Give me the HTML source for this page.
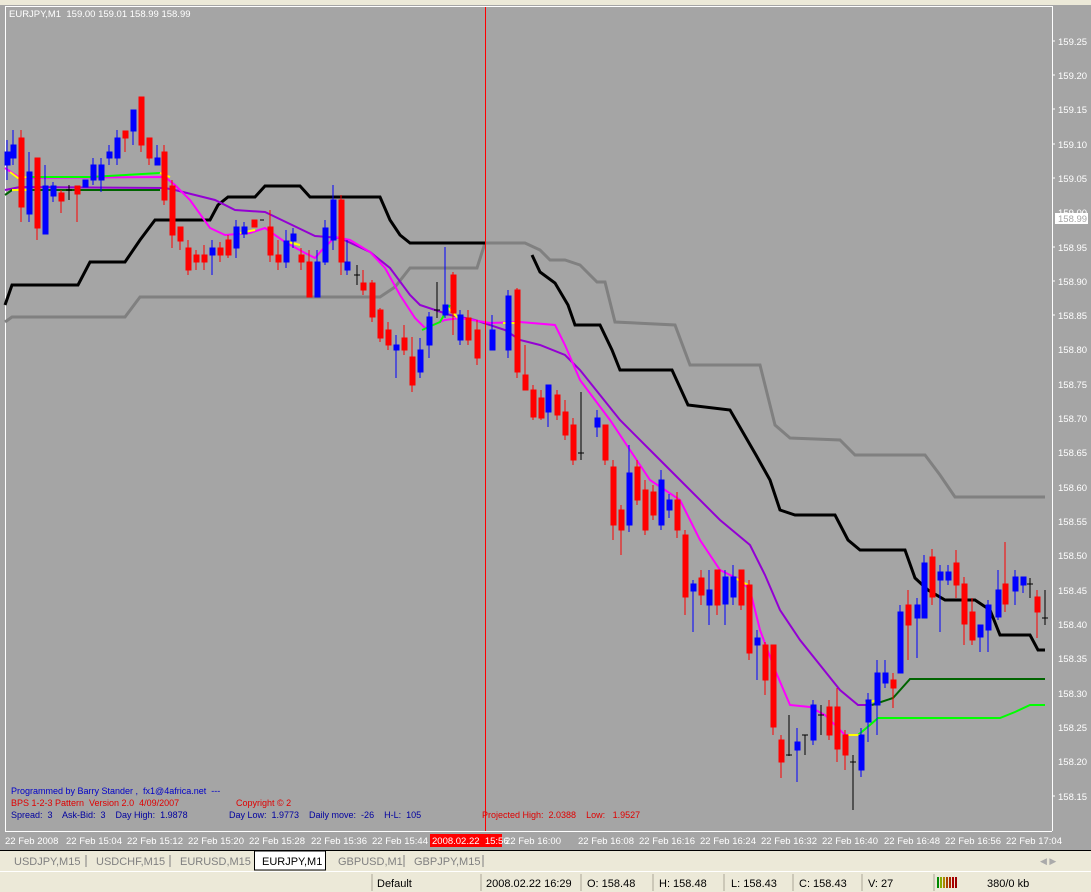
<!DOCTYPE html>
<html><head><meta charset="utf-8"><style>
body{margin:0;width:1091px;height:892px;overflow:hidden;background:#ece9d8;font-family:"Liberation Sans",sans-serif}
svg{position:absolute;left:0;top:0}
text{white-space:pre}
</style></head><body>
<svg width="1091" height="892" xmlns="http://www.w3.org/2000/svg" font-family="Liberation Sans, sans-serif" xml:space="preserve">
<rect x="0" y="0" width="1091" height="850" fill="#a5a5a5"/>
<rect x="0" y="0" width="1091" height="5" fill="#ece9d8"/>
<line x1="5.5" y1="6" x2="5.5" y2="831" stroke="#fff"/>
<line x1="5" y1="6.5" x2="1052" y2="6.5" stroke="#fff"/>
<line x1="1052.5" y1="6" x2="1052.5" y2="831" stroke="#fff"/>
<line x1="5" y1="831.5" x2="1052" y2="831.5" stroke="#fff"/>
<text x="9" y="17" font-size="9.5" fill="#fff">EURJPY,M1  159.00 159.01 158.99 158.99</text>
<g font-size="9.5" fill="#fff">
<text x="1058" y="45">159.25</text><text x="1058" y="79">159.20</text><text x="1058" y="113">159.15</text><text x="1058" y="148">159.10</text><text x="1058" y="182">159.05</text><text x="1058" y="216">159.00</text><text x="1058" y="251">158.95</text><text x="1058" y="285">158.90</text><text x="1058" y="319">158.85</text><text x="1058" y="353">158.80</text><text x="1058" y="388">158.75</text><text x="1058" y="422">158.70</text><text x="1058" y="456">158.65</text><text x="1058" y="491">158.60</text><text x="1058" y="525">158.55</text><text x="1058" y="559">158.50</text><text x="1058" y="594">158.45</text><text x="1058" y="628">158.40</text><text x="1058" y="662">158.35</text><text x="1058" y="697">158.30</text><text x="1058" y="731">158.25</text><text x="1058" y="765">158.20</text><text x="1058" y="800">158.15</text>
</g>
<rect x="1055" y="213" width="33" height="11" fill="#fff"/><text x="1058" y="222" font-size="9.5" fill="#a5a5a5">158.99</text>
<g stroke="#fff"><line x1="1052" y1="41" x2="1055" y2="41"/><line x1="1052" y1="75" x2="1055" y2="75"/><line x1="1052" y1="109" x2="1055" y2="109"/><line x1="1052" y1="144" x2="1055" y2="144"/><line x1="1052" y1="178" x2="1055" y2="178"/><line x1="1052" y1="247" x2="1055" y2="247"/><line x1="1052" y1="281" x2="1055" y2="281"/><line x1="1052" y1="315" x2="1055" y2="315"/><line x1="1052" y1="796" x2="1055" y2="796"/></g>
<polyline fill="none" stroke="#808080" stroke-width="3" points="5,322 12,317 125,317 140,297 380,297 395,287 410,268 477,268 485,243 525,243 540,250 550,260 565,260 580,265 597,282 605,282 615,322 675,325 690,365 760,365 775,425 790,438 840,440 855,455 925,455 940,475 955,497 1045,497"/>
<polyline fill="none" stroke="#000" stroke-width="3" points="5,305 12,285 78,285 90,262 125,262 140,240 155,220 210,220 218,205 228,197 255,197 265,186 300,186 310,197 380,197 390,220 400,235 410,243 485,243"/>
<polyline fill="none" stroke="#000" stroke-width="3" points="532,255 540,272 555,283 568,305 575,325 600,325 612,350 620,370 672,370 688,405 730,410 756,455 770,480 780,510 795,515 835,515 848,540 860,550 905,550 915,578 928,590 945,600 975,600 990,610 1000,635 1030,635 1038,650 1045,650"/>
<polyline fill="none" stroke="#9400d3" stroke-width="2" points="5,190 20,187 165,188 175,190 215,200 235,210 265,212 290,224 315,236 340,238 355,245 370,252 390,268 410,295 420,305 450,315 475,320 505,330 520,340 540,345 565,355 580,370 600,395 620,420 650,450 680,480 720,520 750,545 765,575 780,610 800,640 820,665 840,690 858,705 872,705"/>
<polyline fill="none" stroke="#ff00ff" stroke-width="2" points="5,168 20,178 165,177 175,185 190,200 210,228 225,235 250,233 265,228 285,242 305,253 315,258 322,250 335,237 350,240 370,252 385,268 400,295 415,318 425,328 445,320 460,318 490,323 520,322 555,325 565,345 580,380 610,420 630,450 650,480 665,490 680,500 700,540 720,570 740,580 750,590 760,630 775,670 790,705 810,707 825,715 845,735 858,735"/>
<polyline fill="none" stroke="#00ff00" stroke-width="2" points="30,177 90,177 160,173"/>
<polyline fill="none" stroke="#006400" stroke-width="2" points="5,195 12,190 160,190"/>
<polyline fill="none" stroke="#00ff00" stroke-width="2" points="422,330 440,322 450,305"/>
<polyline fill="none" stroke="#00ff00" stroke-width="2" points="858,735 870,725 878,718 1000,718 1015,712 1030,705 1045,705"/>
<polyline fill="none" stroke="#006400" stroke-width="2" points="872,705 893,698 910,679 1045,679"/>
<g stroke="#ffff00" stroke-width="2" fill="none"><polyline points="10,172 18,178 30,177"/><polyline points="12,190 30,190"/><polyline points="160,173 170,177"/><polyline points="240,233 255,230"/><polyline points="288,242 300,245"/><polyline points="445,305 458,318"/><polyline points="503,323 515,323"/><polyline points="735,578 748,585"/><polyline points="848,735 860,735"/><polyline points="865,703 878,700"/></g>
<rect x="485" y="7" width="1" height="824" fill="#ff0000"/>
<g stroke-width="1">
<g stroke="#0000ff" fill="#0000ff">
<line x1="7" y1="140" x2="7" y2="180"/><rect x="5" y="152" width="5" height="13"/>
<line x1="13" y1="130" x2="13" y2="165"/><rect x="11" y="145" width="5" height="13"/>
<line x1="29" y1="152" x2="29" y2="222"/><rect x="27" y="172" width="5" height="42"/>
<line x1="45" y1="165" x2="45" y2="234"/><rect x="43" y="186" width="5" height="48"/>
<line x1="53" y1="182" x2="53" y2="202"/><rect x="51" y="186" width="5" height="10"/>
<rect x="83" y="180" width="5" height="7"/>
<line x1="93" y1="158" x2="93" y2="185"/><rect x="91" y="165" width="5" height="15"/>
<line x1="101" y1="158" x2="101" y2="192"/><rect x="99" y="165" width="5" height="15"/>
<line x1="109" y1="145" x2="109" y2="165"/><rect x="107" y="152" width="5" height="6"/>
<line x1="117" y1="130" x2="117" y2="165"/><rect x="115" y="138" width="5" height="20"/>
<line x1="133" y1="110" x2="133" y2="145"/><rect x="131" y="110" width="5" height="21"/>
<line x1="157" y1="145" x2="157" y2="165"/><rect x="155" y="158" width="5" height="7"/>
<line x1="212" y1="240" x2="212" y2="275"/><rect x="210" y="248" width="5" height="7"/>
<line x1="236" y1="220" x2="236" y2="258"/><rect x="234" y="227" width="5" height="21"/>
<line x1="244" y1="222" x2="244" y2="238"/><rect x="242" y="227" width="5" height="7"/>
<line x1="286" y1="230" x2="286" y2="268"/><rect x="284" y="241" width="5" height="21"/>
<line x1="293" y1="228" x2="293" y2="248"/><rect x="291" y="234" width="5" height="7"/>
<line x1="317" y1="250" x2="317" y2="297"/><rect x="315" y="262" width="5" height="35"/>
<line x1="325" y1="220" x2="325" y2="265"/><rect x="323" y="228" width="5" height="34"/>
<line x1="333" y1="185" x2="333" y2="250"/><rect x="331" y="200" width="5" height="40"/>
<line x1="347" y1="240" x2="347" y2="275"/><rect x="345" y="262" width="5" height="8"/>
<line x1="396" y1="335" x2="396" y2="378"/><rect x="394" y="345" width="5" height="5"/>
<line x1="420" y1="338" x2="420" y2="378"/><rect x="418" y="350" width="5" height="22"/>
<line x1="429" y1="312" x2="429" y2="358"/><rect x="427" y="317" width="5" height="28"/>
<line x1="445" y1="247" x2="445" y2="318"/><rect x="443" y="305" width="5" height="10"/>
<line x1="460" y1="310" x2="460" y2="345"/><rect x="458" y="315" width="5" height="25"/>
<line x1="492" y1="315" x2="492" y2="350"/><rect x="490" y="330" width="5" height="20"/>
<line x1="508" y1="290" x2="508" y2="358"/><rect x="506" y="296" width="5" height="54"/>
<line x1="548" y1="385" x2="548" y2="427"/><rect x="546" y="385" width="5" height="27"/>
<line x1="597" y1="410" x2="597" y2="437"/><rect x="595" y="418" width="5" height="9"/>
<line x1="629" y1="445" x2="629" y2="532"/><rect x="627" y="473" width="5" height="52"/>
<line x1="661" y1="470" x2="661" y2="530"/><rect x="659" y="480" width="5" height="45"/>
<line x1="669" y1="494" x2="669" y2="518"/><rect x="667" y="500" width="5" height="10"/>
<line x1="693" y1="580" x2="693" y2="632"/><rect x="691" y="584" width="5" height="7"/>
<line x1="709" y1="570" x2="709" y2="625"/><rect x="707" y="590" width="5" height="15"/>
<line x1="725" y1="570" x2="725" y2="625"/><rect x="723" y="577" width="5" height="27"/>
<line x1="733" y1="565" x2="733" y2="605"/><rect x="731" y="577" width="5" height="20"/>
<line x1="757" y1="630" x2="757" y2="680"/><rect x="755" y="638" width="5" height="7"/>
<line x1="797" y1="728" x2="797" y2="782"/><rect x="795" y="742" width="5" height="8"/>
<line x1="813" y1="700" x2="813" y2="745"/><rect x="811" y="705" width="5" height="35"/>
<line x1="861" y1="728" x2="861" y2="777"/><rect x="859" y="735" width="5" height="35"/>
<line x1="868" y1="693" x2="868" y2="742"/><rect x="866" y="700" width="5" height="22"/>
<line x1="877" y1="660" x2="877" y2="735"/><rect x="875" y="673" width="5" height="32"/>
<line x1="885" y1="660" x2="885" y2="688"/><rect x="883" y="673" width="5" height="10"/>
<line x1="900" y1="605" x2="900" y2="673"/><rect x="898" y="612" width="5" height="61"/>
<line x1="917" y1="598" x2="917" y2="658"/><rect x="915" y="605" width="5" height="13"/>
<line x1="924" y1="555" x2="924" y2="618"/><rect x="922" y="563" width="5" height="55"/>
<line x1="940" y1="565" x2="940" y2="632"/><rect x="938" y="572" width="5" height="8"/>
<line x1="948" y1="565" x2="948" y2="585"/><rect x="946" y="572" width="5" height="8"/>
<line x1="980" y1="625" x2="980" y2="652"/><rect x="978" y="625" width="5" height="12"/>
<line x1="988" y1="600" x2="988" y2="652"/><rect x="986" y="605" width="5" height="25"/>
<line x1="998" y1="570" x2="998" y2="620"/><rect x="996" y="590" width="5" height="27"/>
<line x1="1015" y1="570" x2="1015" y2="605"/><rect x="1013" y="577" width="5" height="14"/>
<line x1="1023" y1="577" x2="1023" y2="593"/><rect x="1021" y="577" width="5" height="8"/>
</g>
<g stroke="#ff0000" fill="#ff0000">
<line x1="21" y1="130" x2="21" y2="222"/><rect x="19" y="138" width="5" height="69"/>
<line x1="37" y1="158" x2="37" y2="240"/><rect x="35" y="158" width="5" height="70"/>
<line x1="61" y1="190" x2="61" y2="213"/><rect x="59" y="193" width="5" height="8"/>
<line x1="77" y1="186" x2="77" y2="222"/><rect x="75" y="186" width="5" height="8"/>
<line x1="125" y1="131" x2="125" y2="152"/><rect x="123" y="131" width="5" height="7"/>
<line x1="141" y1="97" x2="141" y2="152"/><rect x="139" y="97" width="5" height="48"/>
<line x1="149" y1="138" x2="149" y2="165"/><rect x="147" y="138" width="5" height="20"/>
<line x1="164" y1="145" x2="164" y2="205"/><rect x="162" y="152" width="5" height="48"/>
<line x1="172" y1="180" x2="172" y2="248"/><rect x="170" y="186" width="5" height="49"/>
<line x1="180" y1="227" x2="180" y2="250"/><rect x="178" y="227" width="5" height="14"/>
<line x1="188" y1="240" x2="188" y2="275"/><rect x="186" y="248" width="5" height="22"/>
<line x1="196" y1="250" x2="196" y2="270"/><rect x="194" y="255" width="5" height="7"/>
<line x1="204" y1="245" x2="204" y2="270"/><rect x="202" y="255" width="5" height="7"/>
<line x1="220" y1="242" x2="220" y2="262"/><rect x="218" y="248" width="5" height="7"/>
<line x1="228" y1="235" x2="228" y2="258"/><rect x="226" y="240" width="5" height="15"/>
<rect x="252" y="220" width="5" height="7"/>
<line x1="270" y1="210" x2="270" y2="262"/><rect x="268" y="227" width="5" height="28"/>
<line x1="278" y1="240" x2="278" y2="270"/><rect x="276" y="255" width="5" height="7"/>
<line x1="301" y1="248" x2="301" y2="270"/><rect x="299" y="255" width="5" height="7"/>
<line x1="309" y1="250" x2="309" y2="297"/><rect x="307" y="262" width="5" height="35"/>
<line x1="341" y1="195" x2="341" y2="275"/><rect x="339" y="200" width="5" height="62"/>
<line x1="363" y1="270" x2="363" y2="295"/><rect x="361" y="283" width="5" height="7"/>
<line x1="372" y1="280" x2="372" y2="322"/><rect x="370" y="283" width="5" height="34"/>
<line x1="380" y1="308" x2="380" y2="342"/><rect x="378" y="310" width="5" height="28"/>
<line x1="388" y1="322" x2="388" y2="350"/><rect x="386" y="330" width="5" height="15"/>
<line x1="404" y1="325" x2="404" y2="355"/><rect x="402" y="338" width="5" height="12"/>
<line x1="412" y1="337" x2="412" y2="392"/><rect x="410" y="357" width="5" height="28"/>
<line x1="453" y1="272" x2="453" y2="335"/><rect x="451" y="275" width="5" height="38"/>
<line x1="468" y1="310" x2="468" y2="345"/><rect x="466" y="318" width="5" height="22"/>
<line x1="477" y1="320" x2="477" y2="365"/><rect x="475" y="330" width="5" height="28"/>
<line x1="517" y1="288" x2="517" y2="378"/><rect x="515" y="290" width="5" height="82"/>
<line x1="525" y1="345" x2="525" y2="390"/><rect x="523" y="375" width="5" height="15"/>
<line x1="533" y1="385" x2="533" y2="420"/><rect x="531" y="390" width="5" height="27"/>
<line x1="541" y1="390" x2="541" y2="420"/><rect x="539" y="398" width="5" height="20"/>
<line x1="557" y1="390" x2="557" y2="420"/><rect x="555" y="395" width="5" height="20"/>
<line x1="565" y1="400" x2="565" y2="440"/><rect x="563" y="412" width="5" height="23"/>
<line x1="573" y1="418" x2="573" y2="465"/><rect x="571" y="425" width="5" height="35"/>
<line x1="605" y1="425" x2="605" y2="465"/><rect x="603" y="425" width="5" height="35"/>
<line x1="613" y1="460" x2="613" y2="540"/><rect x="611" y="467" width="5" height="58"/>
<line x1="621" y1="505" x2="621" y2="555"/><rect x="619" y="510" width="5" height="20"/>
<line x1="637" y1="460" x2="637" y2="505"/><rect x="635" y="467" width="5" height="33"/>
<line x1="645" y1="480" x2="645" y2="535"/><rect x="643" y="490" width="5" height="40"/>
<line x1="653" y1="485" x2="653" y2="520"/><rect x="651" y="492" width="5" height="23"/>
<line x1="677" y1="492" x2="677" y2="538"/><rect x="675" y="500" width="5" height="30"/>
<line x1="685" y1="530" x2="685" y2="615"/><rect x="683" y="535" width="5" height="62"/>
<line x1="701" y1="570" x2="701" y2="605"/><rect x="699" y="578" width="5" height="17"/>
<line x1="717" y1="570" x2="717" y2="615"/><rect x="715" y="570" width="5" height="35"/>
<line x1="741" y1="570" x2="741" y2="610"/><rect x="739" y="570" width="5" height="35"/>
<line x1="749" y1="580" x2="749" y2="660"/><rect x="747" y="585" width="5" height="68"/>
<line x1="765" y1="642" x2="765" y2="695"/><rect x="763" y="645" width="5" height="35"/>
<line x1="773" y1="645" x2="773" y2="735"/><rect x="771" y="645" width="5" height="82"/>
<line x1="781" y1="735" x2="781" y2="778"/><rect x="779" y="740" width="5" height="22"/>
<line x1="829" y1="700" x2="829" y2="740"/><rect x="827" y="707" width="5" height="28"/>
<line x1="837" y1="688" x2="837" y2="762"/><rect x="835" y="707" width="5" height="42"/>
<line x1="845" y1="730" x2="845" y2="770"/><rect x="843" y="735" width="5" height="20"/>
<line x1="893" y1="673" x2="893" y2="708"/><rect x="891" y="680" width="5" height="8"/>
<line x1="908" y1="590" x2="908" y2="660"/><rect x="906" y="605" width="5" height="20"/>
<line x1="932" y1="549" x2="932" y2="605"/><rect x="930" y="557" width="5" height="40"/>
<line x1="956" y1="550" x2="956" y2="598"/><rect x="954" y="563" width="5" height="22"/>
<line x1="964" y1="577" x2="964" y2="645"/><rect x="962" y="584" width="5" height="40"/>
<line x1="972" y1="598" x2="972" y2="645"/><rect x="970" y="612" width="5" height="28"/>
<line x1="1005" y1="542" x2="1005" y2="612"/><rect x="1003" y="584" width="5" height="20"/>
<line x1="1037" y1="590" x2="1037" y2="638"/><rect x="1035" y="597" width="5" height="15"/>
</g>
<g stroke="#000" fill="none">
<line x1="69" y1="185" x2="69" y2="200"/><line x1="66" y1="190" x2="72" y2="190"/>
<line x1="260" y1="220" x2="264" y2="220"/>
<line x1="357" y1="265" x2="357" y2="285"/><line x1="354" y1="275" x2="360" y2="275"/>
<line x1="437" y1="282" x2="437" y2="318"/><line x1="434" y1="310" x2="440" y2="310"/>
<line x1="581" y1="392" x2="581" y2="460"/><line x1="578" y1="453" x2="584" y2="453"/>
<line x1="789" y1="715" x2="789" y2="756"/><line x1="786" y1="755" x2="792" y2="755"/>
<line x1="805" y1="735" x2="805" y2="755"/><line x1="802" y1="735" x2="808" y2="735"/>
<line x1="821" y1="705" x2="821" y2="735"/><line x1="818" y1="715" x2="824" y2="715"/>
<line x1="853" y1="755" x2="853" y2="810"/><line x1="850" y1="762" x2="856" y2="762"/>
<line x1="1030" y1="578" x2="1030" y2="598"/><line x1="1027" y1="584" x2="1033" y2="584"/>
<line x1="1045" y1="590" x2="1045" y2="625"/><line x1="1042" y1="618" x2="1048" y2="618"/>
</g>
</g>
<text x="11" y="794" font-size="9" fill="#0000c8">Programmed by Barry Stander ,  fx1@4africa.net  ---</text>
<text x="11" y="806" font-size="9" fill="#e00000">BPS 1-2-3 Pattern  Version 2.0  4/09/2007</text>
<text x="236" y="806" font-size="9" fill="#e00000">Copyright © 2</text>
<text x="11" y="818" font-size="9" fill="#0000a0">Spread:  3    Ask-Bid:  3    Day High:  1.9878</text>
<text x="229" y="818" font-size="9" fill="#0000a0">Day Low:  1.9773    Daily move:  -26    H-L:  105</text>
<text x="482" y="818" font-size="9" fill="#e00000">Projected High:  2.0388    Low:   1.9527</text>
<g font-size="9.5" fill="#fff">
<text x="5" y="844">22 Feb 2008</text><text x="66" y="844">22 Feb 15:04</text><text x="127" y="844">22 Feb 15:12</text><text x="188" y="844">22 Feb 15:20</text><text x="249" y="844">22 Feb 15:28</text><text x="311" y="844">22 Feb 15:36</text><text x="372" y="844">22 Feb 15:44</text><text x="505" y="844">22 Feb 16:00</text><text x="578" y="844">22 Feb 16:08</text><text x="639" y="844">22 Feb 16:16</text><text x="700" y="844">22 Feb 16:24</text><text x="761" y="844">22 Feb 16:32</text><text x="822" y="844">22 Feb 16:40</text><text x="884" y="844">22 Feb 16:48</text><text x="945" y="844">22 Feb 16:56</text><text x="1006" y="844">22 Feb 17:04</text>
</g>
<rect x="430" y="834" width="72" height="13" fill="#ff0000"/>
<text x="432" y="844" font-size="9.5" fill="#fff">2008.02.22  15:56</text>
<line x1="0" y1="850.5" x2="1091" y2="850.5" stroke="#000"/>
<rect x="0" y="851" width="1091" height="20" fill="#ece9d8"/>
<g font-size="11" fill="#808080">
<text x="14" y="865">USDJPY,M15</text><text x="96" y="865">USDCHF,M15</text><text x="180" y="865">EURUSD,M15</text><text x="338" y="865">GBPUSD,M1</text><text x="414" y="865">GBPJPY,M15</text>
</g>
<g stroke="#808080"><line x1="86" y1="855" x2="86" y2="867"/><line x1="170" y1="855" x2="170" y2="867"/><line x1="404" y1="855" x2="404" y2="867"/><line x1="483" y1="855" x2="483" y2="867"/></g>
<rect x="254.5" y="851" width="71" height="19" fill="#fff" stroke="#000"/>
<text x="262" y="865" font-size="11" fill="#000">EURJPY,M1</text>
<text x="1040" y="864" font-size="9" fill="#aaa">◀ ▶</text>
<line x1="0" y1="871.5" x2="1091" y2="871.5" stroke="#fff"/>
<g font-size="11" fill="#000">
<text x="377" y="887">Default</text><text x="486" y="887">2008.02.22 16:29</text><text x="587" y="887">O: 158.48</text><text x="659" y="887">H: 158.48</text><text x="731" y="887">L: 158.43</text><text x="799" y="887">C: 158.43</text><text x="868" y="887">V: 27</text><text x="987" y="887">380/0 kb</text>
</g>
<g stroke="#aca899"><line x1="372" y1="874" x2="372" y2="891"/><line x1="481" y1="874" x2="481" y2="891"/><line x1="581" y1="874" x2="581" y2="891"/><line x1="653" y1="874" x2="653" y2="891"/><line x1="724" y1="874" x2="724" y2="891"/><line x1="793" y1="874" x2="793" y2="891"/><line x1="862" y1="874" x2="862" y2="891"/><line x1="934" y1="874" x2="934" y2="891"/></g>
<g stroke-width="2"><line x1="938" y1="877" x2="938" y2="888" stroke="#080"/><line x1="941" y1="877" x2="941" y2="888" stroke="#8a0"/><line x1="944" y1="877" x2="944" y2="888" stroke="#a80"/><line x1="947" y1="877" x2="947" y2="888" stroke="#a40"/><line x1="950" y1="877" x2="950" y2="888" stroke="#a20"/><line x1="953" y1="877" x2="953" y2="888" stroke="#a00"/><line x1="956" y1="877" x2="956" y2="888" stroke="#900"/></g>
</svg>
</body></html>
